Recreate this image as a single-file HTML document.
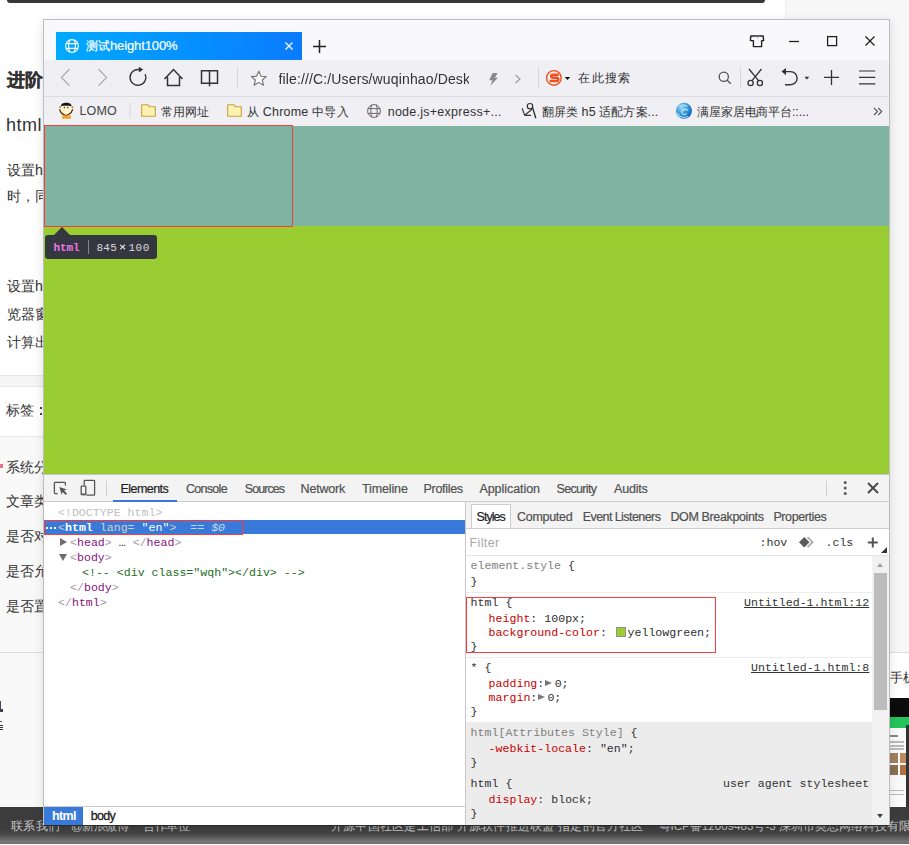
<!DOCTYPE html>
<html><head><meta charset="utf-8">
<style>
*{margin:0;padding:0;box-sizing:border-box}
html,body{width:909px;height:845px;overflow:hidden;background:#fff;position:relative;font-family:"Liberation Sans",sans-serif}
.a{position:absolute}
.t{position:absolute;white-space:pre}
b{font-weight:bold} i{font-style:italic}
</style></head><body>

<div class="a" style="left:7px;top:0;width:758px;height:3px;background:#383838;border-radius:0 0 3px 3px"></div>
<div class="a" style="left:785px;top:0;width:124px;height:652px;background:#f7f7f7;border-left:1px solid #ededed"></div>
<div class="a" style="left:0;top:375px;width:43px;height:12px;background:#f5f5f5;border-top:1px solid #e6e6e6;border-bottom:1px solid #e6e6e6"></div>
<div class="a" style="left:0;top:436px;width:43px;height:216px;background:#f9f9f9;border-top:1px solid #e6e6e6"></div>
<div class="a" style="left:0;top:652px;width:43px;height:155px;background:#f9f9f9;border-top:1px solid #dedede"></div>
<div class="a" style="left:889px;top:652px;width:20px;height:155px;background:#fff;border-top:1px solid #dedede"></div>
<div class="a" style="left:889px;top:698px;width:20px;height:19px;background:#0c0c0c"></div>
<div class="a" style="left:889px;top:717px;width:20px;height:11px;background:#25c35c"></div>
<div class="a" style="left:889px;top:728px;width:20px;height:79px;background:#fafafa"></div>
<div class="a" style="left:890px;top:735px;width:8px;height:2px;background:#888"></div>
<div class="a" style="left:890px;top:741px;width:14px;height:9px;background:linear-gradient(#bbb 0 2px,transparent 2px 4px,#bbb 4px 6px,transparent 6px 7px,#bbb 7px 9px)"></div>
<div class="a" style="left:889px;top:753px;width:9px;height:10px;background:#a08060"></div>
<div class="a" style="left:900px;top:753px;width:7px;height:10px;background:#c08a60"></div>
<div class="a" style="left:889px;top:765px;width:9px;height:10px;background:#8a7050"></div>
<div class="a" style="left:900px;top:765px;width:7px;height:10px;background:#b07040"></div>
<div class="a" style="left:890px;top:790px;width:14px;height:6px;background:linear-gradient(#bbb 0 1px,transparent 1px 4px,#bbb 4px 5px,transparent 5px)"></div>
<div class="a" style="left:906px;top:725px;width:3px;height:82px;background:#333"></div>
<div class="a" style="left:0;top:464px;width:3px;height:4px;background:#e8506a;opacity:.8"></div>
<div class="a" style="left:40px;top:407px;width:2px;height:2px;background:#444"></div>
<div class="a" style="left:40px;top:413px;width:2px;height:2px;background:#444"></div>
<div class="a" style="left:0;top:701px;width:1px;height:11px;background:#3a4a60"></div>
<div class="a" style="left:1px;top:709px;width:2px;height:3px;background:#3a3a50"></div>
<div class="a" style="left:0;top:721px;width:2px;height:1px;background:#555"></div>
<div class="a" style="left:0;top:725px;width:3px;height:1px;background:#333"></div>
<div class="a" style="left:0;top:727px;width:3px;height:1px;background:#333"></div>
<div class="a" style="left:0;top:729px;width:3px;height:1px;background:#333"></div>
<div class="a" style="left:0;top:807px;width:909px;height:37px;background:linear-gradient(#3c3c3c 0px,#3d3d3d 19px,#464646 27px,#7a7a7a 35px,#6e6e6e 36px)"></div>

<div class="t" style='left:6.50px;top:70px;font:bold 17.5px/20px "Liberation Sans",sans-serif;color:#333;-webkit-text-stroke:0.3px #333;'>进阶</div>
<div class="t" style='left:5.90px;top:115px;font:normal 18px/20px "Liberation Sans",sans-serif;color:#333;letter-spacing:0.531px;'>html</div>
<div class="t" style='left:6.90px;top:162px;font:normal 14.2px/16px "Liberation Sans",sans-serif;color:#333;'>设置h</div>
<div class="t" style='left:6.90px;top:188px;font:normal 14.2px/16px "Liberation Sans",sans-serif;color:#333;'>时，同</div>
<div class="t" style='left:6.90px;top:278px;font:normal 14.2px/16px "Liberation Sans",sans-serif;color:#333;'>设置h</div>
<div class="t" style='left:6.90px;top:306px;font:normal 14.2px/16px "Liberation Sans",sans-serif;color:#333;'>览器窗</div>
<div class="t" style='left:6.90px;top:334px;font:normal 14.2px/16px "Liberation Sans",sans-serif;color:#333;'>计算出</div>
<div class="t" style='left:6.30px;top:403px;font:normal 13.6px/15px "Liberation Sans",sans-serif;color:#333;'>标签</div>
<div class="t" style='left:6.20px;top:460px;font:normal 13.8px/15px "Liberation Sans",sans-serif;color:#333;'>系统分</div>
<div class="t" style='left:6.20px;top:493px;font:normal 14px/16px "Liberation Sans",sans-serif;color:#333;'>文章类</div>
<div class="t" style='left:6.20px;top:528px;font:normal 14px/16px "Liberation Sans",sans-serif;color:#333;'>是否对</div>
<div class="t" style='left:6.20px;top:563px;font:normal 14px/16px "Liberation Sans",sans-serif;color:#333;'>是否允</div>
<div class="t" style='left:6.20px;top:598px;font:normal 14px/16px "Liberation Sans",sans-serif;color:#333;'>是否置</div>
<div class="t" style='left:889.50px;top:671px;font:normal 12.5px/14px "Liberation Sans",sans-serif;color:#333;'>手机</div>
<div class="t" style='left:11.00px;top:820px;font:normal 11.6px/12px "Liberation Sans",sans-serif;color:#c6c6c6;letter-spacing:0.333px;'>联系我们</div>
<div class="t" style='left:71.00px;top:820px;font:normal 11.6px/12px "Liberation Sans",sans-serif;color:#c6c6c6;letter-spacing:-0.442px;'>@新浪微博</div>
<div class="t" style='left:143.00px;top:820px;font:normal 11.6px/12px "Liberation Sans",sans-serif;color:#c6c6c6;letter-spacing:-0.333px;'>合作单位</div>
<div class="t" style='left:331.00px;top:820px;font:normal 11.6px/12px "Liberation Sans",sans-serif;color:#c6c6c6;letter-spacing:0.233px;'>开源中国社区是工信部 开源软件推进联盟 指定的官方社区</div>
<div class="t" style='left:658.50px;top:820px;font:normal 11.6px/12px "Liberation Sans",sans-serif;color:#c6c6c6;'>粤ICP备12009483号-3 深圳市奥思网络科技有限公司</div>

<div class="a" style="left:43px;top:19px;width:847px;height:807px;border:1px solid #bdbdbd;border-bottom-color:#2a2a2a;background:#f9f9fb;box-shadow:0 3px 10px rgba(0,0,0,.12)"></div>
<div class="a" style="left:56px;top:32px;width:246px;height:28px;background:linear-gradient(90deg,#00aaff,#0a7bff)"></div>
<div class="a" style="left:44px;top:60px;width:845px;height:66px;background:#f0eff4"></div>
<div class="a" style="left:44px;top:96px;width:845px;height:1px;background:#dcdbe0"></div>
<div class="a" style="left:44px;top:124px;width:250px;height:1px;background:#eaf6f6"></div>
<!-- content -->
<div class="a" style="left:44px;top:126px;width:845px;height:348px;background:#9acd32"></div>
<div class="a" style="left:44px;top:126px;width:845px;height:100px;background:#7eb4a1"></div>
<div class="a" style="left:44px;top:125px;width:249px;height:102px;border:1px solid #ff3a3a"></div>
<div class="a" style="left:45px;top:235px;width:112px;height:24px;background:#343740;border-radius:3px"></div>
<div class="a" style="left:54px;top:227px;width:0;height:0;border-left:8px solid transparent;border-right:8px solid transparent;border-bottom:8px solid #343740"></div>
<div class="a" style="left:88px;top:240px;width:1px;height:14px;background:#888"></div>
<!-- devtools -->
<div class="a" style="left:44px;top:474px;width:845px;height:351px;background:#fff"></div>
<div class="a" style="left:44px;top:474px;width:845px;height:1px;background:#c4c4c4"></div>
<div class="a" style="left:44px;top:475px;width:845px;height:26px;background:#f3f3f3"></div>
<div class="a" style="left:44px;top:501px;width:845px;height:1px;background:#ccc"></div>
<div class="a" style="left:113px;top:500px;width:64px;height:2px;background:#3879d9"></div>
<div class="a" style="left:106px;top:481px;width:1px;height:15px;background:#cfcfcf"></div>
<div class="a" style="left:826px;top:481px;width:1px;height:15px;background:#cfcfcf"></div>
<div class="a" style="left:465px;top:502px;width:1px;height:323px;background:#c8c8c8"></div>
<div class="a" style="left:44px;top:520px;width:421px;height:14px;background:#3879d9"></div>
<div class="a" style="left:44px;top:521px;width:199px;height:14px;border:1px solid #ff3a3a"></div>
<div class="a" style="left:46px;top:527px;width:2px;height:2px;background:#fff"></div>
<div class="a" style="left:50px;top:527px;width:2px;height:2px;background:#fff"></div>
<div class="a" style="left:54px;top:527px;width:2px;height:2px;background:#fff"></div>
<div class="a" style="left:60px;top:538px;width:0;height:0;border-left:7px solid #6e6e6e;border-top:4px solid transparent;border-bottom:4px solid transparent"></div>
<div class="a" style="left:59px;top:554px;width:0;height:0;border-top:7px solid #6e6e6e;border-left:4px solid transparent;border-right:4px solid transparent"></div>
<div class="a" style="left:44px;top:806px;width:421px;height:1px;background:#ccc"></div>
<div class="a" style="left:44px;top:807px;width:39px;height:18px;background:#3879d9"></div>
<div class="a" style="left:466px;top:502px;width:423px;height:26px;background:#f3f3f3"></div>
<div class="a" style="left:466px;top:528px;width:423px;height:1px;background:#ccc"></div>
<div class="a" style="left:471px;top:504px;width:40px;height:24px;background:#fff;border:1px solid #ccc;border-bottom:none"></div>
<div class="a" style="left:466px;top:555px;width:423px;height:1px;background:#e3e3e3"></div>
<div class="a" style="left:466px;top:592px;width:407px;height:1px;background:#ececec"></div>
<div class="a" style="left:466px;top:597px;width:250px;height:56px;border:1px solid #ff3a3a"></div>
<div class="a" style="left:466px;top:657px;width:407px;height:1px;background:#ececec"></div>
<div class="a" style="left:466px;top:722px;width:406px;height:103px;background:#ececec"></div>
<div class="a" style="left:872px;top:556px;width:17px;height:269px;background:#f1f1f1"></div>
<div class="a" style="left:874px;top:573px;width:13px;height:137px;background:#bcbcbc"></div>
<div class="a" style="left:616px;top:627px;width:10px;height:10px;background:#9acd32;border:1px solid #909090"></div>
<div class="a" style="left:545px;top:680px;width:0;height:0;border-left:7px solid #777;border-top:3.5px solid transparent;border-bottom:3.5px solid transparent"></div>
<div class="a" style="left:538px;top:694px;width:0;height:0;border-left:7px solid #777;border-top:3.5px solid transparent;border-bottom:3.5px solid transparent"></div>
<div class="a" style="left:877px;top:563px;width:0;height:0;border-bottom:4px solid #a0a0a0;border-left:3.5px solid transparent;border-right:3.5px solid transparent"></div>
<div class="a" style="left:877px;top:814px;width:0;height:0;border-top:4px solid #404040;border-left:3.5px solid transparent;border-right:3.5px solid transparent"></div>
<div class="a" style="left:881px;top:547px;width:0;height:0;border-bottom:6px solid #333;border-left:6px solid transparent"></div>


<svg class="a" style="left:0;top:0" width="909" height="845" viewBox="0 0 909 845" fill="none">
 <!-- tab globe -->
 <g stroke="#fff" stroke-width="1.1">
  <circle cx="72" cy="46" r="6.4"/>
  <path d="M65.8 43.6H78.2M65.8 48.4H78.2M69.6 39.8C68.6 43 68.6 49 69.6 52.2M74.4 39.8C75.4 43 75.4 49 74.4 52.2"/>
 </g>
 <path d="M285.5 42.5L292.5 49.5M292.5 42.5L285.5 49.5" stroke="#fff" stroke-width="1.2"/>
 <path d="M313 46.5H326M319.5 40V53" stroke="#222" stroke-width="1.5"/>
 <!-- window controls -->
 <path d="M750.8 36H763.2L763.6 40.6H761.6V46.6H753.4V40.6H750.4Z" stroke="#222" stroke-width="1.4" stroke-linejoin="round"/>
 <path d="M755.6 36.2Q757.5 38.6 759.4 36.2" stroke="#999" stroke-width="1"/>
 <path d="M789 41.5H799" stroke="#222" stroke-width="1.3"/>
 <rect x="827.6" y="36.6" width="9" height="9" stroke="#222" stroke-width="1.3"/>
 <path d="M865.5 36.5L874.5 45.5M874.5 36.5L865.5 45.5" stroke="#222" stroke-width="1.3"/>
 <!-- toolbar -->
 <path d="M69.5 69L61.5 77.4L69.5 85.8" stroke="#a8a8a8" stroke-width="1.2"/>
 <path d="M98.5 69L106.5 77.4L98.5 85.8" stroke="#a8a8a8" stroke-width="1.2"/>
 <path d="M145.2 74.2A7.9 7.9 0 1 1 139.5 69.6" stroke="#333" stroke-width="1.4"/>
 <path d="M138.8 66.8L143.2 69.6L138.8 72.4Z" fill="#333"/>
 <path d="M164.5 79L173.5 69.5L182.5 79M167.5 77V85.5H179.5V77" stroke="#333" stroke-width="1.5" stroke-linejoin="miter"/>
 <path d="M201.5 70.8H217.5V83.3H201.5ZM209.5 70.8V86.2" stroke="#333" stroke-width="1.5"/>
 <rect x="237" y="67" width="1" height="22" fill="#d6d6da"/>
 <path d="M258.8 71.2L261 76.2L266.2 76.6L262.2 80L263.5 85.2L258.8 82.4L254.1 85.2L255.4 80L251.4 76.6L256.6 76.2Z" fill="#fff" stroke="#707070" stroke-width="1.1" stroke-linejoin="round"/>
 <path d="M492.6 73H497.6L494.9 77.8H497.9L490.4 85.8L492.4 80.2H489.2Z" fill="#8a8a8a"/>
 <path d="M515.5 75L520 79L515.5 83" stroke="#9a9a9a" stroke-width="1.2"/>
 <rect x="538" y="67" width="1" height="22" fill="#d6d6da"/>
 <circle cx="553.9" cy="77.9" r="7.3" stroke="#f2501e" stroke-width="1.4"/>
 <path d="M558.8 74.8H553C550.6 74.8 550.6 77.8 553 77.8H556.5C558.9 77.8 558.9 81 556.5 81H549.6" stroke="#f2501e" stroke-width="2.5" stroke-linejoin="round"/>
 <path d="M564.8 76.9H570.2L567.5 79.9Z" fill="#111"/>
 <circle cx="723.8" cy="76.8" r="4.6" stroke="#555" stroke-width="1.3"/>
 <path d="M727.2 80.2L730.8 83.8" stroke="#555" stroke-width="1.4"/>
 <rect x="740" y="67" width="1" height="22" fill="#d6d6da"/>
 <g stroke="#333" stroke-width="1.3">
  <circle cx="750.6" cy="83" r="2.6"/>
  <circle cx="759.9" cy="83" r="2.6"/>
  <path d="M751.8 80.8L761.5 69M758.7 80.8L749 69"/>
 </g>
 <path d="M785 71.6H790.5A6.6 6.6 0 0 1 790.5 84.8H785" stroke="#333" stroke-width="1.4"/>
 <path d="M781.5 71.6L786 68V75.2Z" fill="#333"/>
 <path d="M804.5 76.8H809.3L806.9 79.4Z" fill="#333"/>
 <path d="M824 77.4H839M831.5 69.9V84.9" stroke="#333" stroke-width="1.3"/>
 <path d="M859 71H875.3M859 77.4H875.3M859 83.8H875.3" stroke="#333" stroke-width="1.2"/>
 <!-- bookmarks -->
 <rect x="129.5" y="103" width="1" height="15" fill="#d6d6da"/>
 <g>
  <path d="M141.7 104.7H147.8L149.3 106.7H155.3V116.3H141.7Z" fill="#fdf2b0" stroke="#c8a23c" stroke-width="1.1" stroke-linejoin="round"/>
  <path d="M227.7 104.7H233.8L235.3 106.7H241.3V116.3H227.7Z" fill="#fdf2b0" stroke="#c8a23c" stroke-width="1.1" stroke-linejoin="round"/>
 </g>
 <g stroke="#6a6a6a" stroke-width="1">
  <circle cx="374" cy="111" r="6.4"/>
  <path d="M367.8 108.6H380.2M367.8 113.4H380.2M371.6 104.8C370.6 108 370.6 114 371.6 117.2M376.4 104.8C377.4 108 377.4 114 376.4 117.2"/>
 </g>
 <circle cx="530" cy="106.2" r="2.7" stroke="#333" stroke-width="1.2"/>
 <path d="M522.2 108.2L524.6 115.2Q527 115.6 531.2 115.2M524.8 115L532.2 109.2" stroke="#333" stroke-width="1.1" stroke-linejoin="round"/>
 <path d="M532.6 107.6L535.8 118.2" stroke="#333" stroke-width="1.4"/>
 <defs><radialGradient id="orb" cx="0.35" cy="0.3" r="0.8"><stop offset="0" stop-color="#9fd8f5"/><stop offset="0.55" stop-color="#2a8fd8"/><stop offset="1" stop-color="#0b5bc0"/></radialGradient></defs>
 <circle cx="684" cy="110.8" r="8" fill="url(#orb)"/>
 <path d="M679 106.5C681 104.8 685 104.6 687.5 106.5M677.5 113C678.5 117 684 118.5 688 116.5M686.6 113.5C685 115.6 681.6 114.6 681.8 112C682 109.5 686 108.6 688 110.5" stroke="#b8ecf8" stroke-width="1.3" opacity=".85"/>
 <path d="M874 108L877.5 111.5L874 115M878.2 108L881.7 111.5L878.2 115" stroke="#555" stroke-width="1.1"/>
 <!-- lomo avatar -->
 <ellipse cx="66" cy="110" rx="7" ry="6.2" fill="#fff4d2"/>
 <path d="M61 106.5C61 103.5 63 102.8 66.2 102.8C69.5 102.8 71.5 103.5 71.5 106.5L69.5 105.8H62.8Z" fill="#1a1a1a"/>
 <path d="M59.6 109.2Q60.5 114.2 66 115.6Q71.6 114.2 72.6 109.2" stroke="#5a2a08" stroke-width="1.2"/>
 <path d="M62.2 115.6H70.8L71 118.8H62Z" fill="#f3a424"/>
 <circle cx="64.4" cy="107.6" r="0.8" fill="#6a3a10"/><circle cx="67.8" cy="107.6" r="0.8" fill="#6a3a10"/>
 <circle cx="60" cy="107.2" r="0.9" fill="#b07040"/><circle cx="72.5" cy="107.2" r="0.9" fill="#b07040"/>
 <path d="M120.3 244.8L125 249.2M125 244.8L120.3 249.2" stroke="#d9d9d9" stroke-width="1.2"/>
 <!-- devtools icons -->
 <path d="M57.7 493.6H55.2Q54.4 493.6 54.4 492.8V483.2Q54.4 482.4 55.2 482.4H64.6Q65.4 482.4 65.4 483.2V485.6" stroke="#555" stroke-width="1.3"/>
 <path d="M59.4 487.1L66.8 489.5L64 490.6L67 493.6L65.7 494.9L62.7 491.9L61.6 494.7Z" fill="#555"/>
 <path d="M84.2 485.2V481.2Q84.2 480.4 85 480.4H93.8Q94.6 480.4 94.6 481.2V494.4Q94.6 495.2 93.8 495.2H86.4" stroke="#555" stroke-width="1.3"/>
 <rect x="81.2" y="486.1" width="4.6" height="8.5" rx="0.6" stroke="#555" stroke-width="1.3"/>
 <path d="M81 494.3H86" stroke="#555" stroke-width="1.6"/>
 <circle cx="845.2" cy="482.5" r="1.5" fill="#5a5a5a"/><circle cx="845.2" cy="488" r="1.5" fill="#5a5a5a"/><circle cx="845.2" cy="493.5" r="1.5" fill="#5a5a5a"/>
 <path d="M868 483L878 493M878 483L868 493" stroke="#444" stroke-width="1.8"/>
 <path d="M799 542.2L804.3 537L809.5 542.2L804.3 547.5Z" fill="#5a5a5a"/>
 <path d="M807.5 537.2L812.6 542.2L807.5 547.2" stroke="#aaa" stroke-width="1.8"/>
 <path d="M867.8 542.5H877.8M872.8 537.5V547.5" stroke="#555" stroke-width="2"/>
</svg>

<div class="t" style='left:86.20px;top:38px;font:normal 13px/15px "Liberation Sans",sans-serif;color:#fff;letter-spacing:-0.119px;-webkit-text-stroke:0.2px #fff;'><span style="font-size:12.35px">测试</span>height100%</div>
<div class="t" style='left:278.50px;top:71px;font:normal 14px/16px "Liberation Sans",sans-serif;color:#333;letter-spacing:0.137px;-webkit-mask-image:linear-gradient(90deg,#000 190px,transparent 190.5px);'>file:///C:/Users/wuqinhao/Desk</div>
<div class="t" style='left:578.40px;top:70px;font:normal 13px/15px "Liberation Sans",sans-serif;color:#333;letter-spacing:1.167px;'><span style="font-size:12.35px">在此搜索</span></div>
<div class="t" style='left:79.40px;top:104px;font:normal 12.5px/14px "Liberation Sans",sans-serif;color:#444;letter-spacing:0.204px;'>LOMO</div>
<div class="t" style='left:161.10px;top:105px;font:normal 12.5px/14px "Liberation Sans",sans-serif;color:#333;letter-spacing:-0.067px;'><span style="font-size:11.88px">常用网址</span></div>
<div class="t" style='left:246.80px;top:105px;font:normal 12.5px/14px "Liberation Sans",sans-serif;color:#333;letter-spacing:0.227px;'><span style="font-size:11.88px">从</span> Chrome <span style="font-size:11.88px">中导入</span></div>
<div class="t" style='left:387.70px;top:105px;font:normal 12.5px/14px "Liberation Sans",sans-serif;color:#333;letter-spacing:0.260px;'>node.js+express+...</div>
<div class="t" style='left:541.80px;top:105px;font:normal 12.5px/14px "Liberation Sans",sans-serif;color:#333;letter-spacing:0.085px;'><span style="font-size:11.88px">翻屏类</span> h5 <span style="font-size:11.88px">适配方案</span>...</div>
<div class="t" style='left:697.00px;top:105px;font:normal 12.5px/14px "Liberation Sans",sans-serif;color:#333;letter-spacing:-0.124px;'><span style="font-size:11.88px">满屋家居电商平台</span>::...</div>
<div class="t" style='left:53.60px;top:242px;font:bold 11px/12px "Liberation Mono",monospace;color:#ee78e6;letter-spacing:-0.134px;'>html</div>
<div class="t" style='left:96.40px;top:242px;font:normal 11px/12px "Liberation Mono",monospace;color:#d9d9d9;letter-spacing:0.299px;'>845</div>
<div class="t" style='left:128.50px;top:242px;font:normal 11px/12px "Liberation Mono",monospace;color:#d9d9d9;letter-spacing:0.499px;'>100</div>
<div class="t" style='left:120.60px;top:482px;font:normal 12.5px/14px "Liberation Sans",sans-serif;color:#222;letter-spacing:-0.565px;-webkit-text-stroke:0.2px #222;'>Elements</div>
<div class="t" style='left:185.90px;top:482px;font:normal 12.5px/14px "Liberation Sans",sans-serif;color:#505050;letter-spacing:-0.685px;-webkit-text-stroke:0.2px #505050;'>Console</div>
<div class="t" style='left:244.80px;top:482px;font:normal 12.5px/14px "Liberation Sans",sans-serif;color:#505050;letter-spacing:-0.951px;-webkit-text-stroke:0.2px #505050;'>Sources</div>
<div class="t" style='left:300.60px;top:482px;font:normal 12.5px/14px "Liberation Sans",sans-serif;color:#505050;letter-spacing:-0.199px;-webkit-text-stroke:0.2px #505050;'>Network</div>
<div class="t" style='left:362.10px;top:482px;font:normal 12.5px/14px "Liberation Sans",sans-serif;color:#505050;letter-spacing:-0.146px;-webkit-text-stroke:0.2px #505050;'>Timeline</div>
<div class="t" style='left:423.50px;top:482px;font:normal 12.5px/14px "Liberation Sans",sans-serif;color:#505050;letter-spacing:-0.304px;-webkit-text-stroke:0.2px #505050;'>Profiles</div>
<div class="t" style='left:479.40px;top:482px;font:normal 12.5px/14px "Liberation Sans",sans-serif;color:#505050;letter-spacing:-0.050px;-webkit-text-stroke:0.2px #505050;'>Application</div>
<div class="t" style='left:556.50px;top:482px;font:normal 12.5px/14px "Liberation Sans",sans-serif;color:#505050;letter-spacing:-0.672px;-webkit-text-stroke:0.2px #505050;'>Security</div>
<div class="t" style='left:614.00px;top:482px;font:normal 12.5px/14px "Liberation Sans",sans-serif;color:#505050;letter-spacing:-0.178px;-webkit-text-stroke:0.2px #505050;'>Audits</div>
<div class="t" style='left:476.60px;top:510px;font:normal 12.5px/14px "Liberation Sans",sans-serif;color:#222;letter-spacing:-0.958px;-webkit-text-stroke:0.2px #222;'>Styles</div>
<div class="t" style='left:517.00px;top:510px;font:normal 12.5px/14px "Liberation Sans",sans-serif;color:#505050;letter-spacing:-0.289px;-webkit-text-stroke:0.2px #505050;'>Computed</div>
<div class="t" style='left:582.70px;top:510px;font:normal 12.5px/14px "Liberation Sans",sans-serif;color:#505050;letter-spacing:-0.565px;-webkit-text-stroke:0.2px #505050;'>Event Listeners</div>
<div class="t" style='left:670.40px;top:510px;font:normal 12.5px/14px "Liberation Sans",sans-serif;color:#505050;letter-spacing:-0.364px;-webkit-text-stroke:0.2px #505050;'>DOM Breakpoints</div>
<div class="t" style='left:773.40px;top:510px;font:normal 12.5px/14px "Liberation Sans",sans-serif;color:#505050;letter-spacing:-0.402px;-webkit-text-stroke:0.2px #505050;'>Properties</div>
<div class="t" style='left:469.60px;top:536px;font:normal 12.5px/14px "Liberation Sans",sans-serif;color:#a8a8a8;letter-spacing:0.357px;'>Filter</div>
<div class="t" style='left:51.90px;top:809px;font:bold 12.5px/14px "Liberation Sans",sans-serif;color:#fff;letter-spacing:-0.638px;'>html</div>
<div class="t" style='left:90.80px;top:809px;font:normal 12.5px/14px "Liberation Sans",sans-serif;color:#1a1a1a;letter-spacing:-0.685px;-webkit-text-stroke:0.3px #1a1a1a;'>body</div>
<div class="t" style='left:58.00px;top:506px;font:normal 11.6px/13px "Liberation Mono",monospace;color:#c0c0c0;'>&lt;!DOCTYPE html&gt;</div>
<div class="t" style='left:58.00px;top:521px;font:normal 11.6px/13px "Liberation Mono",monospace;color:#fff;'><span style="color:#d8cfb8">&lt;</span><b>html</b> <span style="color:#d8cfb8">lang=</span> "en"<span style="color:#d8cfb8">&gt;</span>  <i style="color:#c9d6ee">== $0</i></div>
<div class="t" style='left:70.00px;top:536px;font:normal 11.6px/13px "Liberation Mono",monospace;color:#222;'><span style="color:#a894a6">&lt;</span><span style="color:#881280">head</span><span style="color:#a894a6">&gt;</span> <span style="color:#222">…</span> <span style="color:#a894a6">&lt;/</span><span style="color:#881280">head</span><span style="color:#a894a6">&gt;</span></div>
<div class="t" style='left:70.00px;top:551px;font:normal 11.6px/13px "Liberation Mono",monospace;color:#222;'><span style="color:#a894a6">&lt;</span><span style="color:#881280">body</span><span style="color:#a894a6">&gt;</span></div>
<div class="t" style='left:82.00px;top:566px;font:normal 11.6px/13px "Liberation Mono",monospace;color:#236e25;'>&lt;!-- &lt;div class="wqh"&gt;&lt;/div&gt; --&gt;</div>
<div class="t" style='left:70.00px;top:581px;font:normal 11.6px/13px "Liberation Mono",monospace;color:#222;'><span style="color:#a894a6">&lt;/</span><span style="color:#881280">body</span><span style="color:#a894a6">&gt;</span></div>
<div class="t" style='left:58.00px;top:596px;font:normal 11.6px/13px "Liberation Mono",monospace;color:#222;'><span style="color:#a894a6">&lt;/</span><span style="color:#881280">html</span><span style="color:#a894a6">&gt;</span></div>
<div class="t" style='left:470.60px;top:559px;font:normal 11.6px/13px "Liberation Mono",monospace;color:#303030;'><span style="color:#808080">element.style</span> {</div>
<div class="t" style='left:470.60px;top:575px;font:normal 11.6px/13px "Liberation Mono",monospace;color:#303030;'>}</div>
<div class="t" style='left:470.60px;top:596px;font:normal 11.6px/13px "Liberation Mono",monospace;color:#303030;'>html {</div>
<div class="t" style='left:488.60px;top:612px;font:normal 11.6px/13px "Liberation Mono",monospace;color:#303030;'><span style="color:#c80000">height</span>: 100px;</div>
<div class="t" style='left:488.60px;top:626px;font:normal 11.6px/13px "Liberation Mono",monospace;color:#303030;'><span style="color:#c80000">background-color</span>: <span style="display:inline-block;width:13.7px;height:1px"></span>yellowgreen;</div>
<div class="t" style='left:470.60px;top:640px;font:normal 11.6px/13px "Liberation Mono",monospace;color:#303030;'>}</div>
<div class="t" style='left:744.00px;top:596px;font:normal 11.6px/13px "Liberation Mono",monospace;color:#333;'><u>Untitled-1.html:12</u></div>
<div class="t" style='left:470.60px;top:661px;font:normal 11.6px/13px "Liberation Mono",monospace;color:#303030;'>* {</div>
<div class="t" style='left:488.60px;top:677px;font:normal 11.6px/13px "Liberation Mono",monospace;color:#303030;'><span style="color:#c80000">padding</span>:<span style="display:inline-block;width:10.4px"></span>0;</div>
<div class="t" style='left:488.60px;top:691px;font:normal 11.6px/13px "Liberation Mono",monospace;color:#303030;'><span style="color:#c80000">margin</span>:<span style="display:inline-block;width:10.1px"></span>0;</div>
<div class="t" style='left:470.60px;top:705px;font:normal 11.6px/13px "Liberation Mono",monospace;color:#303030;'>}</div>
<div class="t" style='left:751.00px;top:661px;font:normal 11.6px/13px "Liberation Mono",monospace;color:#333;'><u>Untitled-1.html:8</u></div>
<div class="t" style='left:470.60px;top:726px;font:normal 11.6px/13px "Liberation Mono",monospace;color:#303030;'><span style="color:#808080">html[Attributes Style]</span> {</div>
<div class="t" style='left:488.60px;top:742px;font:normal 11.6px/13px "Liberation Mono",monospace;color:#303030;'><span style="color:#c80000">-webkit-locale</span>: "en";</div>
<div class="t" style='left:470.60px;top:756px;font:normal 11.6px/13px "Liberation Mono",monospace;color:#303030;'>}</div>
<div class="t" style='left:470.60px;top:777px;font:normal 11.6px/13px "Liberation Mono",monospace;color:#303030;'>html {</div>
<div class="t" style='left:488.60px;top:793px;font:normal 11.6px/13px "Liberation Mono",monospace;color:#303030;'><span style="color:#c80000">display</span>: block;</div>
<div class="t" style='left:470.60px;top:807px;font:normal 11.6px/13px "Liberation Mono",monospace;color:#303030;'>}</div>
<div class="t" style='left:723.00px;top:777px;font:normal 11.6px/13px "Liberation Mono",monospace;color:#333;'>user agent stylesheet</div>
<div class="t" style='left:759.50px;top:536px;font:normal 11.6px/13px "Liberation Mono",monospace;color:#333;'>:hov</div>
<div class="t" style='left:825.50px;top:536px;font:normal 11.6px/13px "Liberation Mono",monospace;color:#333;'>.cls</div>
</body></html>
